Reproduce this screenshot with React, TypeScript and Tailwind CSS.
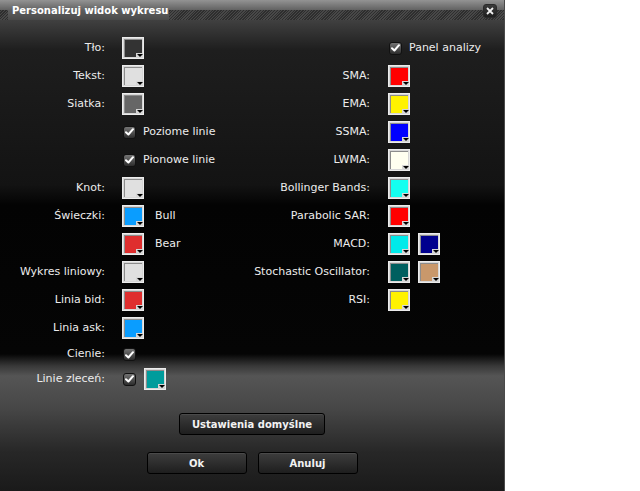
import React from 'react';

const font = "font-['DejaVu_Sans',sans-serif]";

function Swatch({ color }: { color: string }) {
  return (
    <div className="relative w-[22px] h-[22px] shrink-0 bg-[#d6d6d6] p-[2px] shadow-[inset_0_0_0_1px_#ececec]">
      <div className="w-full h-full border-t border-l border-[#8c8c8c]" style={{ backgroundColor: color }} />
      <div className="absolute right-[1px] bottom-[1px] w-[7px] h-[5px] bg-[#d6d6d6] flex items-center justify-center">
        <div className="w-0 h-0 border-l-[3px] border-r-[3px] border-t-[3px] border-l-transparent border-r-transparent border-t-black" />
      </div>
    </div>
  );
}

function Check() {
  return (
    <div className="ml-[1px] w-[13px] h-[13px] shrink-0 rounded-[3px] border border-[#111] bg-[linear-gradient(to_bottom,#747474,#2c2c2c)] flex items-center justify-center">
      <svg width="9" height="8" viewBox="0 0 9 8">
        <path d="M1 4.2 L3.4 6.5 L8 1.2" fill="none" stroke="#fff" strokeWidth="2" strokeLinecap="round" strokeLinejoin="round" />
      </svg>
    </div>
  );
}

function LeftRow({ label, children, extra = '' }: { label?: string; children: React.ReactNode; extra?: string }) {
  return (
    <div className={`flex items-center ${extra}`}>
      <div className="w-[105px] shrink-0 text-right whitespace-nowrap">{label}</div>
      <div className="ml-[17px] flex items-center">{children}</div>
    </div>
  );
}

function RightRow({ label, children }: { label?: string; children: React.ReactNode }) {
  return (
    <div className="flex items-center h-[22px]">
      <div className="w-[120px] shrink-0 text-right whitespace-nowrap">{label}</div>
      <div className="ml-[18px] flex items-center gap-[8px]">{children}</div>
    </div>
  );
}

function Button({ label, width }: { label: string; width: string }) {
  return (
    <button
      className={`${width} h-[22px] rounded-[3px] border border-black bg-[linear-gradient(to_bottom,#3d3d3d,#1e1e1e)] shadow-[inset_0_1px_0_#4a4a4a] text-[10px] font-bold text-[#f2f2f2]`}
    >
      {label}
    </button>
  );
}

export default function App() {
  return (
    <div className={`w-[640px] h-[491px] bg-white flex ${font}`}>
      <div className="w-[505px] h-full flex flex-col border-r border-[#4a4a4a]">
        {/* title bar */}
        <div className="relative h-[20px] shrink-0">
          <div className="h-[10px] bg-[linear-gradient(to_bottom,#939393,#626262)]" />
          <div className="h-[10px] flex bg-[repeating-linear-gradient(135deg,#2e2e2e_0px,#2e2e2e_1px,#484848_1px,#484848_2px)]">
            <div className="ml-[8px] w-[161px] h-full bg-[linear-gradient(to_bottom,#5e5e5e,#4a4a4a)]" />
          </div>
          <div className="absolute left-[12px] top-0 h-[20px] flex items-center text-[10px] font-bold text-white">
            Personalizuj widok wykresu
          </div>
          <div className="absolute left-[483px] top-[4px] w-[14px] h-[14px] rounded-[3px] bg-[linear-gradient(to_bottom,#3a3a3a,#1e1e1e)] border border-[#2a2a2a] flex items-center justify-center">
            <svg width="8" height="8" viewBox="0 0 8 8">
              <path d="M1 1 L7 7 M7 1 L1 7" stroke="#f0f0f0" strokeWidth="1.8" />
            </svg>
          </div>
        </div>

        {/* body */}
        <div className="flex-1 flex flex-col pt-[17px] text-[11px] text-[#ececec] bg-[linear-gradient(to_bottom,#404040_0px,#1e1e1e_30px,#131313_165px,#030303_185px,#050505_334px,#383838_346px,#555555_356px,#474747_388px,#272727_432px,#1a1a1a_471px)]">
          <div className="flex">
            <div className="w-[250px] shrink-0 flex flex-col gap-[6px]">
              <LeftRow label="Tło:" extra="h-[22px]"><Swatch color="#333333" /></LeftRow>
              <LeftRow label="Tekst:" extra="h-[22px]"><Swatch color="#e0e0e0" /></LeftRow>
              <LeftRow label="Siatka:" extra="h-[22px]"><Swatch color="#666666" /></LeftRow>
              <LeftRow extra="h-[22px]">
                <Check />
                <span className="ml-[7px]">Poziome linie</span>
              </LeftRow>
              <LeftRow extra="h-[22px]">
                <Check />
                <span className="ml-[7px]">Pionowe linie</span>
              </LeftRow>
              <LeftRow label="Knot:" extra="h-[22px]"><Swatch color="#e0e0e0" /></LeftRow>
              <LeftRow label="Świeczki:" extra="h-[22px]">
                <Swatch color="#0a9dff" />
                <span className="ml-[11px]">Bull</span>
              </LeftRow>
              <LeftRow extra="h-[22px]">
                <Swatch color="#df2e2e" />
                <span className="ml-[11px]">Bear</span>
              </LeftRow>
              <LeftRow label="Wykres liniowy:" extra="h-[22px]"><Swatch color="#e0e0e0" /></LeftRow>
              <LeftRow label="Linia bid:" extra="h-[22px]"><Swatch color="#df2e2e" /></LeftRow>
              <LeftRow label="Linia ask:" extra="h-[22px]"><Swatch color="#0a9dff" /></LeftRow>
              <LeftRow label="Cienie:" extra="h-[13px] mt-[3px]"><Check /></LeftRow>
              <LeftRow label="Linie zleceń:" extra="h-[22px] mt-[1px]">
                <Check />
                <div className="ml-[8px]"><Swatch color="#009c9c" /></div>
              </LeftRow>
            </div>

            <div className="flex-1 flex flex-col gap-[6px]">
              <RightRow>
                <Check />
                <span className="-ml-[1px]">Panel analizy</span>
              </RightRow>
              <RightRow label="SMA:"><Swatch color="#ff0000" /></RightRow>
              <RightRow label="EMA:"><Swatch color="#fff200" /></RightRow>
              <RightRow label="SSMA:"><Swatch color="#0000ff" /></RightRow>
              <RightRow label="LWMA:"><Swatch color="#fffff0" /></RightRow>
              <RightRow label="Bollinger Bands:"><Swatch color="#14fff0" /></RightRow>
              <RightRow label="Parabolic SAR:"><Swatch color="#ff0000" /></RightRow>
              <RightRow label="MACD:">
                <Swatch color="#00eaea" />
                <Swatch color="#00008e" />
              </RightRow>
              <RightRow label="Stochastic Oscillator:">
                <Swatch color="#005f5f" />
                <Swatch color="#c9986b" />
              </RightRow>
              <RightRow label="RSI:"><Swatch color="#fff200" /></RightRow>
            </div>
          </div>

          <div className="mt-[23px] flex flex-col items-center">
            <Button label="Ustawienia domyślne" width="w-[146px]" />
            <div className="mt-[17px] flex gap-[11px]">
              <Button label="Ok" width="w-[100px]" />
              <Button label="Anuluj" width="w-[100px]" />
            </div>
          </div>
        </div>
      </div>
    </div>
  );
}
